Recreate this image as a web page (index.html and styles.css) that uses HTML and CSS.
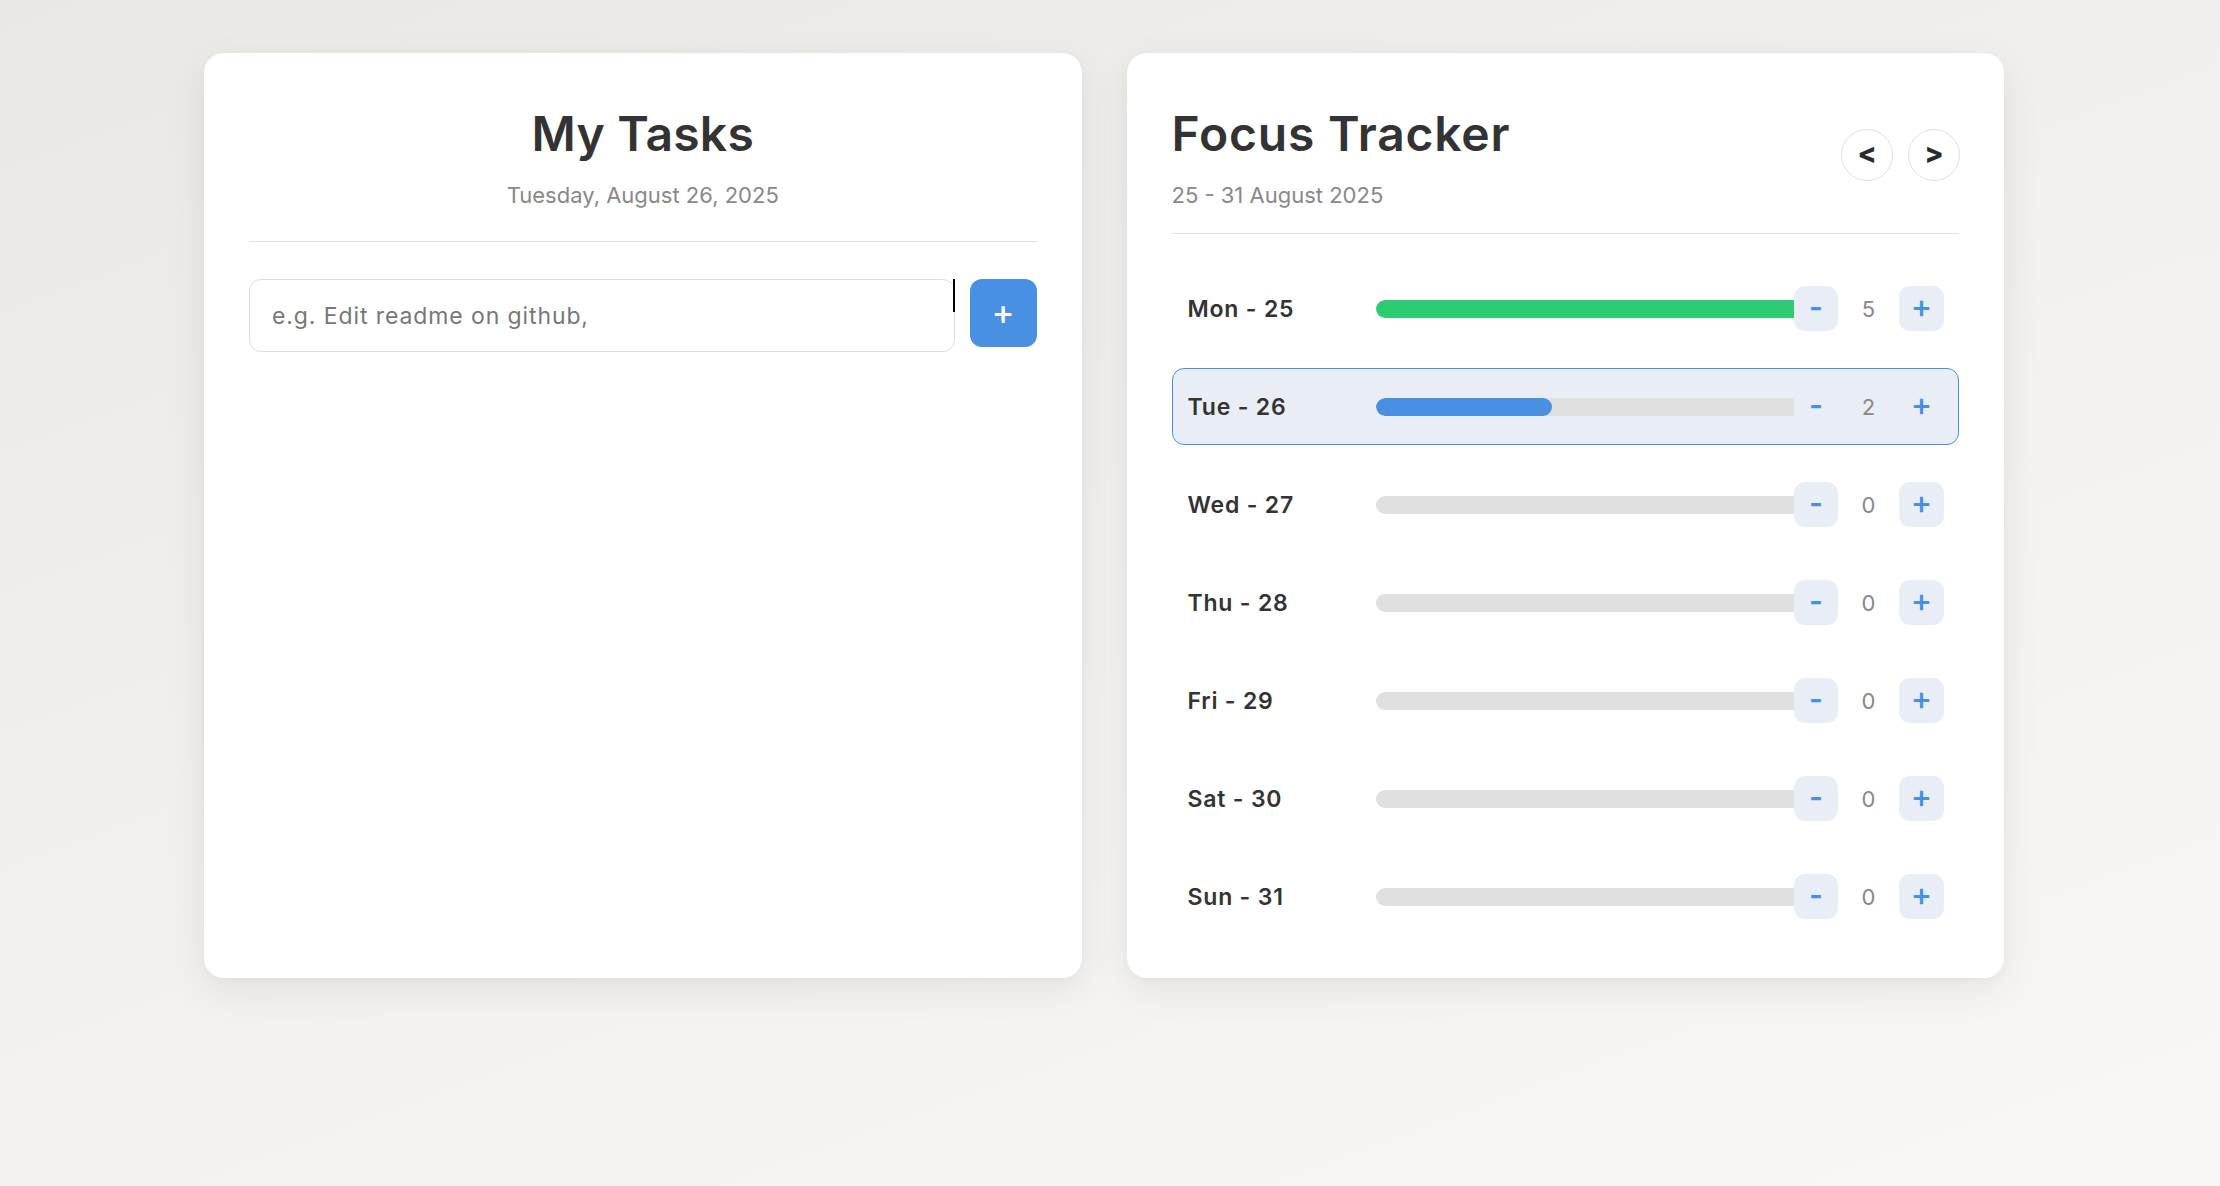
FILE: index.html
```html
<!DOCTYPE html>
<html lang="en">
<head>
<meta charset="utf-8">
<title>My Tasks &amp; Focus Tracker</title>
<link rel="stylesheet" href="styles.css">
</head>
<body>
<main class="app">
  <section class="card tasks">
    <header class="tasks-header">
      <h1 class="title">My Tasks</h1>
      <p class="subtitle">Tuesday, August 26, 2025</p>
    </header>
    <form class="add-form">
      <div class="input-wrap">
        <input class="task-input" type="text" placeholder="e.g. Edit readme on github,">
        <span class="caret"></span>
      </div>
      <button class="add-btn" type="button">+</button>
    </form>
  </section>

  <section class="card tracker">
    <header class="tracker-header">
      <div class="tracker-heading">
        <h1 class="title title-left">Focus Tracker</h1>
        <p class="subtitle">25 - 31 August 2025</p>
      </div>
      <div class="nav">
        <button class="nav-btn" type="button">&lt;</button>
        <button class="nav-btn" type="button">&gt;</button>
      </div>
    </header>
    <ul class="days">
      <li class="day">
        <span class="day-label">Mon - 25</span>
        <div class="track"><div class="fill fill-done" style="width:100%"></div></div>
        <button class="step minus" type="button">-</button>
        <span class="count">5</span>
        <button class="step plus" type="button">+</button>
      </li>
      <li class="day today">
        <span class="day-label">Tue - 26</span>
        <div class="track"><div class="fill" style="width:40%"></div></div>
        <button class="step minus" type="button">-</button>
        <span class="count">2</span>
        <button class="step plus" type="button">+</button>
      </li>
      <li class="day">
        <span class="day-label">Wed - 27</span>
        <div class="track"><div class="fill" style="width:0%"></div></div>
        <button class="step minus" type="button">-</button>
        <span class="count">0</span>
        <button class="step plus" type="button">+</button>
      </li>
      <li class="day">
        <span class="day-label">Thu - 28</span>
        <div class="track"><div class="fill" style="width:0%"></div></div>
        <button class="step minus" type="button">-</button>
        <span class="count">0</span>
        <button class="step plus" type="button">+</button>
      </li>
      <li class="day">
        <span class="day-label">Fri - 29</span>
        <div class="track"><div class="fill" style="width:0%"></div></div>
        <button class="step minus" type="button">-</button>
        <span class="count">0</span>
        <button class="step plus" type="button">+</button>
      </li>
      <li class="day">
        <span class="day-label">Sat - 30</span>
        <div class="track"><div class="fill" style="width:0%"></div></div>
        <button class="step minus" type="button">-</button>
        <span class="count">0</span>
        <button class="step plus" type="button">+</button>
      </li>
      <li class="day">
        <span class="day-label">Sun - 31</span>
        <div class="track"><div class="fill" style="width:0%"></div></div>
        <button class="step minus" type="button">-</button>
        <span class="count">0</span>
        <button class="step plus" type="button">+</button>
      </li>
    </ul>
  </section>
</main>
</body>
</html>
```

FILE: styles.css
```css
* { box-sizing: border-box; }

html, body { height: 100%; }

body {
  margin: 0;
  min-height: 100vh;
  font-family: "Inter", "Noto Sans", "DejaVu Sans", sans-serif;
  color: #333;
  background: linear-gradient(160deg, #e9e8e5 0%, #f1f0ee 45%, #f8f7f5 100%);
}

.app {
  display: grid;
  grid-template-columns: 1fr 1fr;
  gap: 45px;
  padding: 53px 216px 0 204px;
  align-items: stretch;
}

.card {
  background: #fff;
  border-radius: 20px;
  padding: 45px 45px 43px;
  box-shadow: 0 12px 40px rgba(0, 0, 0, 0.07), 0 2px 8px rgba(0, 0, 0, 0.03);
}

.title {
  margin: 0;
  font-size: 48px;
  line-height: 72px;
  font-weight: 600;
  color: #333;
  letter-spacing: 0.2px;
}

.title-left {
  letter-spacing: 0.8px;
}

.subtitle {
  margin: 9px 0 0;
  font-size: 22px;
  line-height: 32px;
  color: #888;
  font-weight: 400;
}

/* Tasks card */
.tasks-header {
  text-align: center;
  padding-bottom: 30px;
  border-bottom: 1px solid #e2e2e2;
}

.add-form {
  display: flex;
  align-items: flex-start;
  gap: 15px;
  margin-top: 37px;
}

.input-wrap {
  position: relative;
  flex: 1;
}

.task-input {
  display: block;
  width: 100%;
  height: 73px;
  padding: 0 22px;
  border: 1px solid #dedede;
  border-radius: 12px;
  font-family: inherit;
  font-size: 23px;
  letter-spacing: 0.9px;
  color: #333;
  outline: none;
  background: #fff;
}

.task-input::placeholder { color: #777; }

.caret {
  position: absolute;
  right: 0;
  top: 0;
  width: 2px;
  height: 33px;
  background: #000;
}

.add-btn {
  flex: none;
  width: 67px;
  height: 68px;
  border: none;
  border-radius: 12px;
  background: #4a90e2;
  color: #fff;
  font-family: inherit;
  font-size: 34px;
  font-weight: 500;
  line-height: 1;
  padding: 0 0 3px;
}

/* Tracker card */
.tracker-header {
  display: flex;
  align-items: center;
  justify-content: space-between;
  padding-bottom: 22px;
  border-bottom: 1px solid #e2e2e2;
}

.nav {
  display: flex;
  gap: 15px;
  margin-right: -1px;
}

.nav-btn {
  width: 52px;
  height: 52px;
  border-radius: 50%;
  border: 1px solid #e0e0e0;
  background: #fff;
  color: #2b2b2b;
  font-family: inherit;
  font-size: 28px;
  font-weight: 800;
  line-height: 1;
  padding: 0 0 3px;
}

.days {
  list-style: none;
  margin: 36px 0 0;
  padding: 0;
  display: flex;
  flex-direction: column;
  gap: 21px;
}

.day {
  display: flex;
  align-items: center;
  height: 77px;
  padding: 0 14px 0 15px;
  border: 1px solid transparent;
  border-radius: 12px;
}

.day.today {
  background: #e9eef6;
  border-color: #4a90e2;
}

.day-label {
  flex: none;
  width: 188px;
  font-size: 23px;
  font-weight: 600;
  letter-spacing: 0.8px;
  color: #333;
}

.track {
  flex: 1;
  height: 18px;
  margin-right: -22px;
  background: #e0e0e0;
  border-radius: 9px;
  overflow: hidden;
}

.fill {
  height: 100%;
  background: #4a90e2;
  border-radius: 9px;
}

.fill-done {
  background: #2ecc71;
  border-radius: 9px 0 0 9px;
}

.step {
  flex: none;
  height: 45px;
  border: none;
  border-radius: 11px;
  background: #e9eef6;
  color: #4a90e2;
  font-family: inherit;
  line-height: 1;
  padding: 0;
}

.minus {
  width: 44px;
  font-size: 30px;
  font-weight: 600;
  padding-bottom: 3px;
}

.plus {
  width: 45px;
  font-size: 32px;
  font-weight: 500;
  padding-bottom: 3px;
}

.count {
  flex: none;
  width: 61px;
  text-align: center;
  font-size: 22px;
  color: #888;
}
```
